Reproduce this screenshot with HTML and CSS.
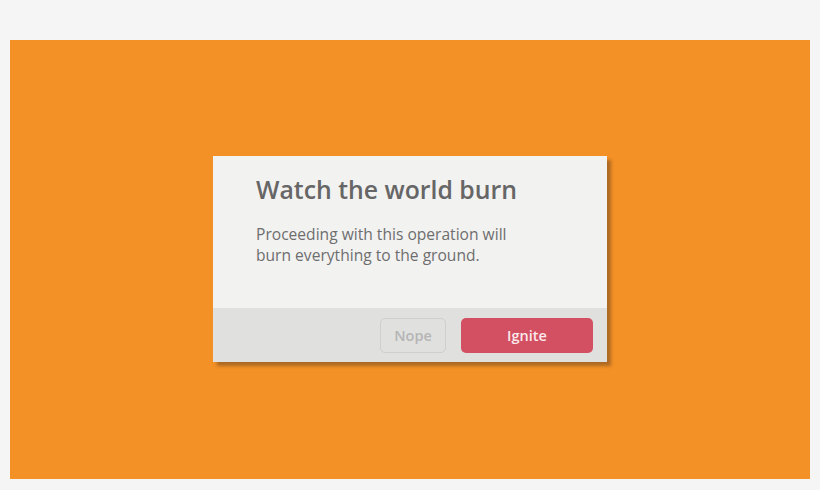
FILE: index.html
```html
<!DOCTYPE html>
<html>
<head>
    <meta charset="UTF-8">
    <title>Watch the world burn</title>
    <link rel="stylesheet" href="styles.css">
</head>
<body>
    <div id="stage">
        <div class="dialog">
            <div class="dialog-body">
                <h2>Watch the world burn</h2>
                <p>Proceeding with this operation will burn everything to the ground.</p>
            </div>
            <div class="dialog-footer">
                <button class="btn btn-nope">Nope</button>
                <button class="btn btn-ignite">Ignite</button>
            </div>
        </div>
    </div>
</body>
</html>
```

FILE: styles.css
```css
body, html {
    margin: 0;
    padding: 0;
    width: 100%;
    height: 100%;
    background-color: #f5f5f5;
    font-family: "Open Sans", sans-serif;
}
body {
    padding: 40px 10px 11px 10px;
    box-sizing: border-box;
}
#stage {
    background-color: #f39026;
    height: 439px;
    display: flex;
    justify-content: center;
    align-items: flex-start;
    padding-top: 116px;
    box-sizing: border-box;
}
.dialog {
    width: 394px;
    background-color: #f2f2f1;
    box-shadow: 4px 4px 3px rgba(90, 60, 30, 0.45);
}
.dialog-body {
    padding: 17px 43px 0 43px;
    height: 152px;
    box-sizing: border-box;
}
.dialog-body h2 {
    margin: 0;
    font-size: 24.8px;
    font-weight: 600;
    color: #666666;
    line-height: 32px;
}
.dialog-body p {
    margin: 19px 0 0 0;
    width: 270px;
    font-size: 15.6px;
    line-height: 21px;
    color: #6e6e6e;
}
.dialog-footer {
    background-color: #e0e0df;
    height: 54px;
    display: flex;
    justify-content: flex-end;
    align-items: flex-start;
    gap: 15px;
    padding: 10px 14px 0 0;
    box-sizing: border-box;
}
.btn {
    height: 35px;
    border-radius: 5px;
    font-family: "Open Sans", sans-serif;
    font-size: 14.5px;
    font-weight: 600;
    cursor: pointer;
}
.btn-nope {
    width: 66px;
    background-color: transparent;
    border: 1px solid #cfcfcf;
    color: #b5b5b5;
}
.btn-ignite {
    width: 132px;
    background-color: #d34f62;
    border: none;
    color: #fbeaec;
}
```
